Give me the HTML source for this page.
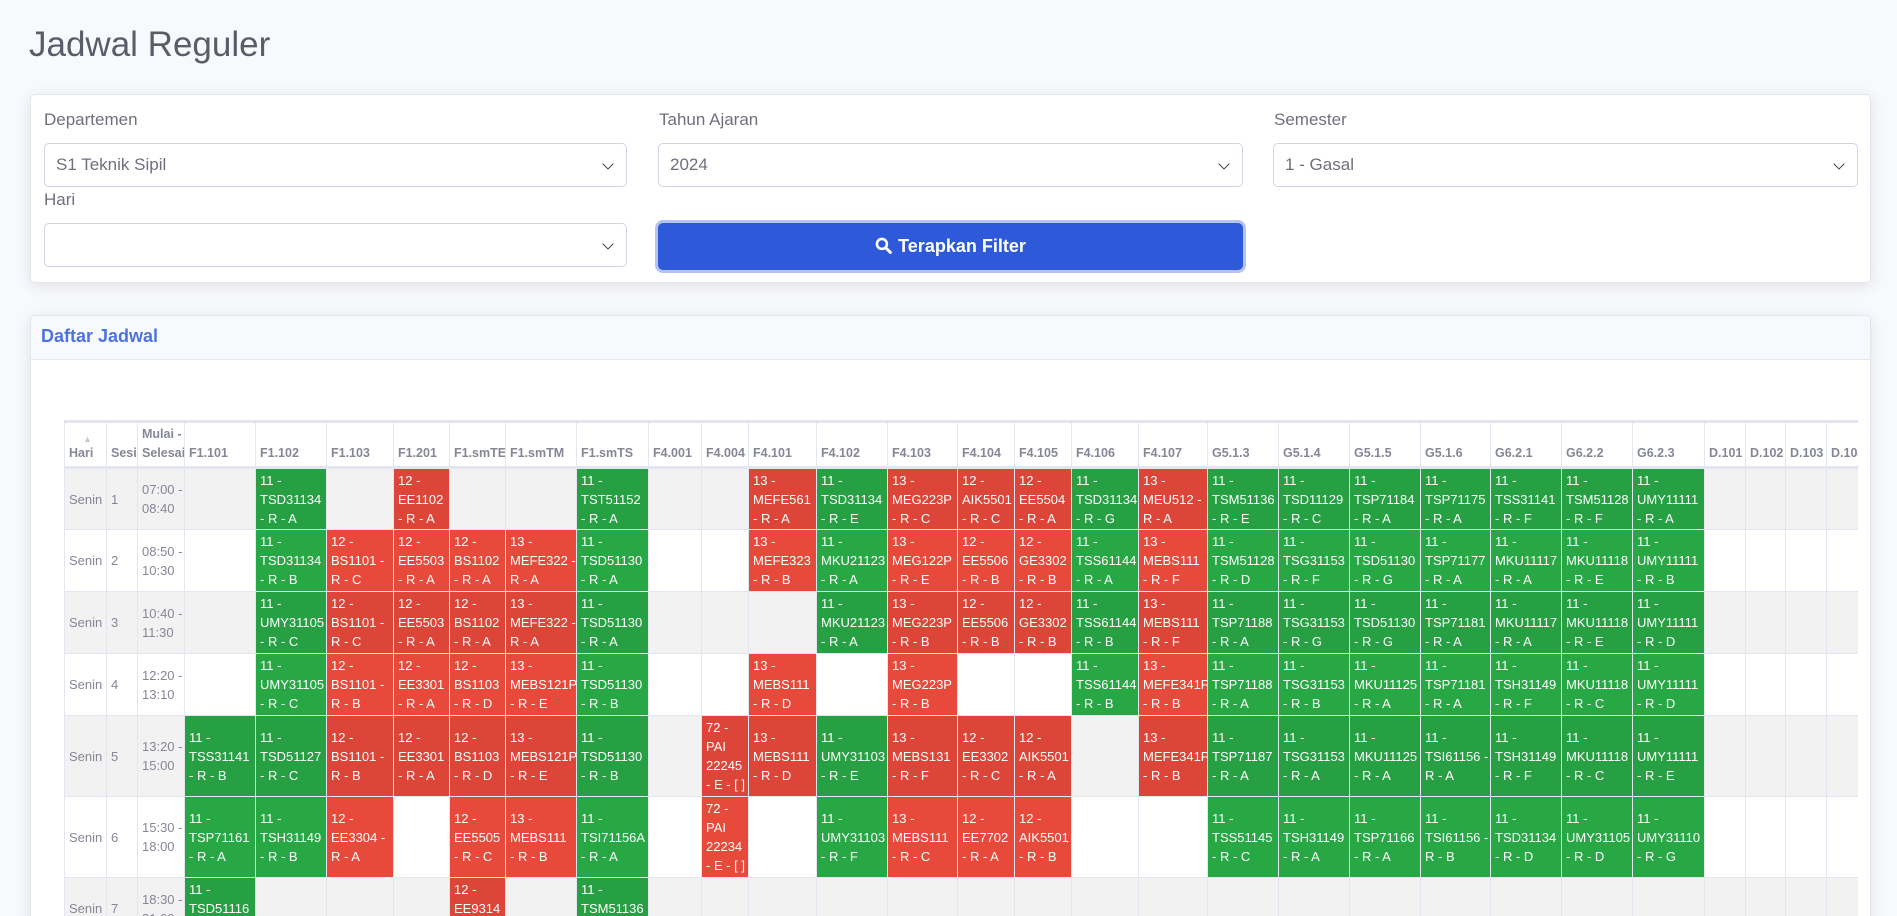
<!DOCTYPE html>
<html style="overflow:hidden;height:916px"><head><meta charset="utf-8">
<style>
*{box-sizing:border-box;margin:0;padding:0}
body{width:1897px;height:916px;overflow:hidden;background:#f8f9fc;font-family:"Liberation Sans",sans-serif;color:#858796;position:relative}
h1{position:absolute;left:29px;top:25px;font-weight:400;font-size:35px;color:#5a5c69}
.card{position:absolute;background:#fff;border:1px solid #e3e6f0;border-radius:5px;box-shadow:0 3px 14px rgba(58,59,69,.12)}
.lbl{position:absolute;font-size:17px;color:#6e707e}
.sel{position:absolute;height:44px;border:1px solid #d1d3e2;border-radius:5px;background:#fff;font-size:17px;color:#6e707e;padding:11px 11px}
.sel:after{content:"";position:absolute;right:14px;top:16px;width:7px;height:7px;border-right:1.6px solid #444;border-bottom:1.6px solid #444;transform:rotate(45deg)}
.btn{position:absolute;left:658px;top:223px;width:585px;height:47px;background:#2e59d9;border-radius:5px;box-shadow:0 0 0 3px #b4c3f0;color:#fff;font-size:18px;font-weight:bold;text-align:center;line-height:47px}
.hdr{position:absolute;left:0;top:0;right:0;height:44px;background:#f8f9fc;border-bottom:1px solid #e3e6f0;border-radius:5px 5px 0 0}
.hdr span{position:absolute;left:10px;top:10px;color:#4e73df;font-weight:bold;font-size:18px}
.wrap{position:absolute;left:64px;top:420px;width:1794px;height:496px;overflow:hidden}
table{border-collapse:collapse;table-layout:fixed;width:1822px;font-size:13px}
td,th{border:1px solid #e3e6f0;padding:0 4px;line-height:19px;overflow:hidden;white-space:nowrap}
th{vertical-align:bottom;text-align:left;color:#858796;font-size:12.5px;padding-bottom:3px;border-bottom:3px solid #e3e6f0;border-top:3px solid #e3e6f0}
td{vertical-align:middle;color:#858796;font-size:13px}
tr.s td{background:#f2f2f2}
td.g{background:#28a745!important;color:#fff}
td.r{background:#e74a3b!important;color:#fff}
tr.s td.g{background:#26a043!important}
tr.s td.r{background:#dc4538!important}
tr.h{height:46px}
tr.a{height:62px}
tr.b{height:81px}
</style></head><body>
<h1>Jadwal Reguler</h1>
<div class="card" style="left:30px;top:94px;width:1841px;height:189px">
<div class="lbl" style="left:13px;top:15px">Departemen</div>
<div class="lbl" style="left:628px;top:15px">Tahun Ajaran</div>
<div class="lbl" style="left:1243px;top:15px">Semester</div>
<div class="lbl" style="left:13px;top:95px">Hari</div>
</div>
<div class="sel" style="left:44px;top:143px;width:583px">S1 Teknik Sipil</div>
<div class="sel" style="left:658px;top:143px;width:585px">2024</div>
<div class="sel" style="left:1273px;top:143px;width:585px">1 - Gasal</div>
<div class="sel" style="left:44px;top:223px;width:583px"></div>
<div class="btn"><svg width="17" height="17" viewBox="0 0 16 16" style="vertical-align:-2px;margin-right:6px"><circle cx="6.5" cy="6.5" r="4.7" fill="none" stroke="#fff" stroke-width="2.4"/><path d="M10 10l4.5 4.5" stroke="#fff" stroke-width="2.8" stroke-linecap="round"/></svg>Terapkan Filter</div>
<div class="card" style="left:30px;top:315px;width:1841px;height:610px"><div class="hdr"><span>Daftar Jadwal</span></div></div>
<div class="wrap"><table>
<colgroup><col style="width:42px"><col style="width:31px"><col style="width:47px"><col style="width:71px"><col style="width:71px"><col style="width:67px"><col style="width:56px"><col style="width:56px"><col style="width:71px"><col style="width:72px"><col style="width:53px"><col style="width:47px"><col style="width:68px"><col style="width:71px"><col style="width:70px"><col style="width:57px"><col style="width:57px"><col style="width:67px"><col style="width:69px"><col style="width:71px"><col style="width:71px"><col style="width:71px"><col style="width:70px"><col style="width:71px"><col style="width:71px"><col style="width:72px"><col style="width:41px"><col style="width:40px"><col style="width:41px"><col style="width:60px"></colgroup>
<tr class="h"><th><span style="font-size:9px;color:#c8c9d0;display:block;line-height:10px;padding-left:14px">▲</span>Hari</th><th>Sesi</th><th>Mulai -<br>Selesai</th><th>F1.101</th><th>F1.102</th><th>F1.103</th><th>F1.201</th><th>F1.smTE</th><th>F1.smTM</th><th>F1.smTS</th><th>F4.001</th><th>F4.004</th><th>F4.101</th><th>F4.102</th><th>F4.103</th><th>F4.104</th><th>F4.105</th><th>F4.106</th><th>F4.107</th><th>G5.1.3</th><th>G5.1.4</th><th>G5.1.5</th><th>G5.1.6</th><th>G6.2.1</th><th>G6.2.2</th><th>G6.2.3</th><th>D.101</th><th>D.102</th><th>D.103</th><th>D.104</th></tr>
<tr class="a s"><td>Senin</td><td>1</td><td>07:00 -<br>08:40</td><td></td><td class="g">11 -<br>TSD31134<br>- R - A</td><td></td><td class="r">12 -<br>EE1102<br>- R - A</td><td></td><td></td><td class="g">11 -<br>TST51152<br>- R - A</td><td></td><td></td><td class="r">13 -<br>MEFE561<br>- R - A</td><td class="g">11 -<br>TSD31134<br>- R - E</td><td class="r">13 -<br>MEG223P<br>- R - C</td><td class="r">12 -<br>AIK5501<br>- R - C</td><td class="r">12 -<br>EE5504<br>- R - A</td><td class="g">11 -<br>TSD31134<br>- R - G</td><td class="r">13 -<br>MEU512 -<br>R - A</td><td class="g">11 -<br>TSM51136<br>- R - E</td><td class="g">11 -<br>TSD11129<br>- R - C</td><td class="g">11 -<br>TSP71184<br>- R - A</td><td class="g">11 -<br>TSP71175<br>- R - A</td><td class="g">11 -<br>TSS31141<br>- R - F</td><td class="g">11 -<br>TSM51128<br>- R - F</td><td class="g">11 -<br>UMY11111<br>- R - A</td><td></td><td></td><td></td><td></td></tr>
<tr class="a"><td>Senin</td><td>2</td><td>08:50 -<br>10:30</td><td></td><td class="g">11 -<br>TSD31134<br>- R - B</td><td class="r">12 -<br>BS1101 -<br>R - C</td><td class="r">12 -<br>EE5503<br>- R - A</td><td class="r">12 -<br>BS1102<br>- R - A</td><td class="r">13 -<br>MEFE322 -<br>R - A</td><td class="g">11 -<br>TSD51130<br>- R - A</td><td></td><td></td><td class="r">13 -<br>MEFE323<br>- R - B</td><td class="g">11 -<br>MKU21123<br>- R - A</td><td class="r">13 -<br>MEG122P<br>- R - E</td><td class="r">12 -<br>EE5506<br>- R - B</td><td class="r">12 -<br>GE3302<br>- R - B</td><td class="g">11 -<br>TSS61144<br>- R - A</td><td class="r">13 -<br>MEBS111<br>- R - F</td><td class="g">11 -<br>TSM51128<br>- R - D</td><td class="g">11 -<br>TSG31153<br>- R - F</td><td class="g">11 -<br>TSD51130<br>- R - G</td><td class="g">11 -<br>TSP71177<br>- R - A</td><td class="g">11 -<br>MKU11117<br>- R - A</td><td class="g">11 -<br>MKU11118<br>- R - E</td><td class="g">11 -<br>UMY11111<br>- R - B</td><td></td><td></td><td></td><td></td></tr>
<tr class="a s"><td>Senin</td><td>3</td><td>10:40 -<br>11:30</td><td></td><td class="g">11 -<br>UMY31105<br>- R - C</td><td class="r">12 -<br>BS1101 -<br>R - C</td><td class="r">12 -<br>EE5503<br>- R - A</td><td class="r">12 -<br>BS1102<br>- R - A</td><td class="r">13 -<br>MEFE322 -<br>R - A</td><td class="g">11 -<br>TSD51130<br>- R - A</td><td></td><td></td><td></td><td class="g">11 -<br>MKU21123<br>- R - A</td><td class="r">13 -<br>MEG223P<br>- R - B</td><td class="r">12 -<br>EE5506<br>- R - B</td><td class="r">12 -<br>GE3302<br>- R - B</td><td class="g">11 -<br>TSS61144<br>- R - B</td><td class="r">13 -<br>MEBS111<br>- R - F</td><td class="g">11 -<br>TSP71188<br>- R - A</td><td class="g">11 -<br>TSG31153<br>- R - G</td><td class="g">11 -<br>TSD51130<br>- R - G</td><td class="g">11 -<br>TSP71181<br>- R - A</td><td class="g">11 -<br>MKU11117<br>- R - A</td><td class="g">11 -<br>MKU11118<br>- R - E</td><td class="g">11 -<br>UMY11111<br>- R - D</td><td></td><td></td><td></td><td></td></tr>
<tr class="a"><td>Senin</td><td>4</td><td>12:20 -<br>13:10</td><td></td><td class="g">11 -<br>UMY31105<br>- R - C</td><td class="r">12 -<br>BS1101 -<br>R - B</td><td class="r">12 -<br>EE3301<br>- R - A</td><td class="r">12 -<br>BS1103<br>- R - D</td><td class="r">13 -<br>MEBS121P<br>- R - E</td><td class="g">11 -<br>TSD51130<br>- R - B</td><td></td><td></td><td class="r">13 -<br>MEBS111<br>- R - D</td><td></td><td class="r">13 -<br>MEG223P<br>- R - B</td><td></td><td></td><td class="g">11 -<br>TSS61144<br>- R - B</td><td class="r">13 -<br>MEFE341P<br>- R - B</td><td class="g">11 -<br>TSP71188<br>- R - A</td><td class="g">11 -<br>TSG31153<br>- R - B</td><td class="g">11 -<br>MKU11125<br>- R - A</td><td class="g">11 -<br>TSP71181<br>- R - A</td><td class="g">11 -<br>TSH31149<br>- R - F</td><td class="g">11 -<br>MKU11118<br>- R - C</td><td class="g">11 -<br>UMY11111<br>- R - D</td><td></td><td></td><td></td><td></td></tr>
<tr class="b s"><td>Senin</td><td>5</td><td>13:20 -<br>15:00</td><td class="g">11 -<br>TSS31141<br>- R - B</td><td class="g">11 -<br>TSD51127<br>- R - C</td><td class="r">12 -<br>BS1101 -<br>R - B</td><td class="r">12 -<br>EE3301<br>- R - A</td><td class="r">12 -<br>BS1103<br>- R - D</td><td class="r">13 -<br>MEBS121P<br>- R - E</td><td class="g">11 -<br>TSD51130<br>- R - B</td><td></td><td class="r">72 -<br>PAI<br>22245<br>- E - [ ]</td><td class="r">13 -<br>MEBS111<br>- R - D</td><td class="g">11 -<br>UMY31103<br>- R - E</td><td class="r">13 -<br>MEBS131<br>- R - F</td><td class="r">12 -<br>EE3302<br>- R - C</td><td class="r">12 -<br>AIK5501<br>- R - A</td><td></td><td class="r">13 -<br>MEFE341P<br>- R - B</td><td class="g">11 -<br>TSP71187<br>- R - A</td><td class="g">11 -<br>TSG31153<br>- R - A</td><td class="g">11 -<br>MKU11125<br>- R - A</td><td class="g">11 -<br>TSI61156 -<br>R - A</td><td class="g">11 -<br>TSH31149<br>- R - F</td><td class="g">11 -<br>MKU11118<br>- R - C</td><td class="g">11 -<br>UMY11111<br>- R - E</td><td></td><td></td><td></td><td></td></tr>
<tr class="b"><td>Senin</td><td>6</td><td>15:30 -<br>18:00</td><td class="g">11 -<br>TSP71161<br>- R - A</td><td class="g">11 -<br>TSH31149<br>- R - B</td><td class="r">12 -<br>EE3304 -<br>R - A</td><td></td><td class="r">12 -<br>EE5505<br>- R - C</td><td class="r">13 -<br>MEBS111<br>- R - B</td><td class="g">11 -<br>TSI71156A<br>- R - A</td><td></td><td class="r">72 -<br>PAI<br>22234<br>- E - [ ]</td><td></td><td class="g">11 -<br>UMY31103<br>- R - F</td><td class="r">13 -<br>MEBS111<br>- R - C</td><td class="r">12 -<br>EE7702<br>- R - A</td><td class="r">12 -<br>AIK5501<br>- R - B</td><td></td><td></td><td class="g">11 -<br>TSS51145<br>- R - C</td><td class="g">11 -<br>TSH31149<br>- R - A</td><td class="g">11 -<br>TSP71166<br>- R - A</td><td class="g">11 -<br>TSI61156 -<br>R - B</td><td class="g">11 -<br>TSD31134<br>- R - D</td><td class="g">11 -<br>UMY31105<br>- R - D</td><td class="g">11 -<br>UMY31110<br>- R - G</td><td></td><td></td><td></td><td></td></tr>
<tr class="a s"><td>Senin</td><td>7</td><td>18:30 -<br>21:00</td><td class="g">11 -<br>TSD51116<br>- R - A</td><td></td><td></td><td></td><td class="r">12 -<br>EE9314<br>- R - A</td><td></td><td class="g">11 -<br>TSM51136<br>- R - A</td><td></td><td></td><td></td><td></td><td></td><td></td><td></td><td></td><td></td><td></td><td></td><td></td><td></td><td></td><td></td><td></td><td></td><td></td><td></td><td></td></tr>
</table></div>
</body></html>
